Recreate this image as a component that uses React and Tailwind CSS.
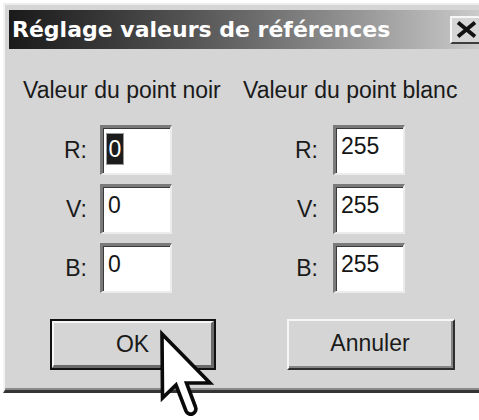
import React from "react";

function Field({ value, selected }) {
  return (
    <div className="ml-[13px] w-[72px] h-[50px] bg-white border-t-[3px] border-l-[3px] border-t-[#7a7a7a] border-l-[#7a7a7a] border-b-2 border-r-2 border-b-[#ececec] border-r-[#ececec] shadow-[inset_1px_1px_0_#3a3a3a]">
      {selected ? (
        <div className="pl-[4px] pt-[4px]">
          <span className="inline-block w-[16px] h-[30px] bg-[#1c1c1c] text-white text-center leading-[30px] outline outline-1 outline-[#9a9a9a]">
            {value}
          </span>
        </div>
      ) : (
        <div className="pl-[5px] pt-[7px] leading-[23px] text-[#151515]">{value}</div>
      )}
    </div>
  );
}

function Row({ label, left, right, selected }) {
  return (
    <div className="flex">
      <div className="w-[220px] pl-[27px] flex items-center">
        <div className="w-[37px] text-right leading-[23px] text-[#1a1a1a]">{label}</div>
        <Field value={left} selected={selected} />
      </div>
      <div className="pl-[38px] flex items-center">
        <div className="w-[37px] text-right leading-[23px] text-[#1a1a1a]">{label}</div>
        <div className="ml-[2px]">
          <Field value={right} />
        </div>
      </div>
    </div>
  );
}

export default function App() {
  return (
    <div className="relative w-[479px] h-[420px] overflow-hidden bg-white font-['Liberation_Sans',Arial,sans-serif] text-[23px]">
      <div className="ml-[3px] mt-[3px] w-[492px] h-[390px] bg-[#d5d5d5] border-t-2 border-l-2 border-t-[#ededed] border-l-[#f3f3f3] border-b-[3px] border-b-[#353535] shadow-[inset_0_-2px_0_#8a8a8a] flex flex-col">
        {/* Title bar */}
        <div className="mx-[4px] mt-[5px] h-[39px] flex items-center bg-linear-to-r from-[#1a1a1a] via-[#6a6a6a] to-[#d0d0d0] pl-[3px] pr-[5px]">
          <span className="font-['DejaVu_Sans',Verdana,sans-serif] font-bold text-[22px] leading-[22px] text-white">
            Réglage valeurs de références
          </span>
          <div className="ml-auto w-[36px] h-[28px] bg-[#d5d5d5] border-t-2 border-l-2 border-t-[#f6f6f6] border-l-[#f6f6f6] border-b-2 border-r-2 border-b-[#3c3c3c] border-r-[#3c3c3c] pl-[4px] pt-[3px]">
            <svg width="21" height="17" viewBox="0 0 21 17">
              <path d="M2 1.5 L19 15.5 M19 1.5 L2 15.5" stroke="#111" strokeWidth="3.8" strokeLinecap="butt" />
            </svg>
          </div>
        </div>

        {/* Headings */}
        <div className="mt-[30px] flex pl-[18px] leading-[23px] text-[#1a1a1a]">
          <div className="w-[220px]">Valeur du point noir</div>
          <div>Valeur du point blanc</div>
        </div>

        {/* Fields */}
        <div className="mt-[23px] pl-[18px] flex flex-col gap-[9px]">
          <Row label="R:" left="0" right="255" selected />
          <Row label="V:" left="0" right="255" />
          <Row label="B:" left="0" right="255" />
        </div>

        {/* Buttons */}
        <div className="mt-[26px] flex pl-[45px] gap-[71px]">
          <div className="w-[166px] h-[51px] border-2 border-[#111] bg-[#d5d5d5]">
            <div className="h-full border-t-2 border-l-2 border-t-[#f6f6f6] border-l-[#f6f6f6] border-b-[3px] border-r-[3px] border-b-[#6a6a6a] border-r-[#6a6a6a] flex items-center justify-center text-[#1a1a1a] leading-[23px]">
              OK
            </div>
          </div>
          <div className="w-[168px] h-[51px] bg-[#d5d5d5] border-t-2 border-l-2 border-t-[#f6f6f6] border-l-[#f6f6f6] border-b-2 border-r-2 border-b-[#2e2e2e] border-r-[#2e2e2e]">
            <div className="h-full border-b-2 border-r-2 border-b-[#858585] border-r-[#858585] flex items-center justify-center text-[#1a1a1a] leading-[23px]">
              Annuler
            </div>
          </div>
        </div>
      </div>

      {/* Mouse cursor */}
      <svg className="absolute left-[150px] top-[325px]" width="70" height="95" viewBox="0 0 70 95">
        <path
          d="M12 9 L12.5 73 L26 60 L36 86 A5 5 0 0 0 45.5 82 L36.5 58 L60 58 Z"
          fill="#fff"
          stroke="#0a0a0a"
          strokeWidth="3.6"
          strokeLinejoin="miter"
        />
      </svg>
    </div>
  );
}
